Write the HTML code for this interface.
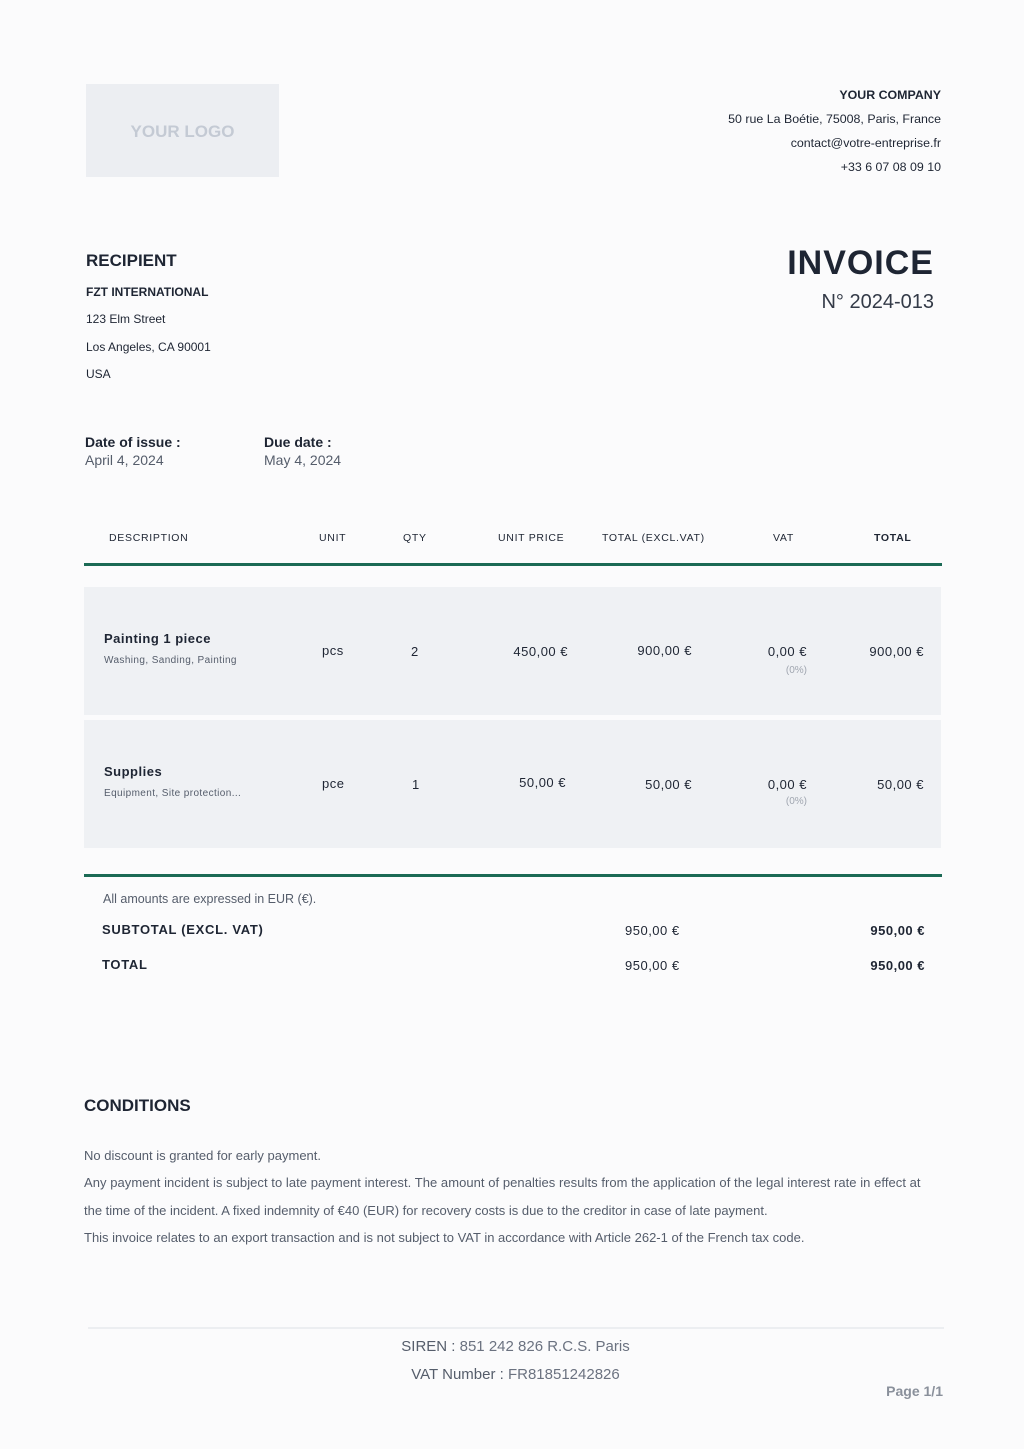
<!DOCTYPE html>
<html><head><meta charset="utf-8"><style>
*{margin:0;padding:0;box-sizing:border-box}
body{width:1024px;height:1449px;background:#fbfbfc;font-family:"Liberation Sans",sans-serif;color:#1e2533;position:relative;overflow:hidden}
.a{position:absolute;white-space:nowrap}
.r{text-align:right}
.c{text-align:center}
.s{font-size:12px}
.n{font-size:13px;letter-spacing:.5px}
.h{font-size:10.5px;letter-spacing:.7px;color:#1e2533}
.g{color:#555d6b}
.row{position:absolute;left:84px;width:857px;background:#eff1f4}
.line{position:absolute;left:84px;width:858px;height:3px;background:#1b6a55}
</style></head><body>
<div class="a" style="left:86px;top:84px;width:193px;height:93px;background:#eceef2"></div>
<div class="a c" style="left:86px;top:122px;width:193px;font-size:17px;font-weight:bold;color:#c4cad4">YOUR LOGO</div>

<div class="a r" style="right:83px;top:88px;font-weight:bold;font-size:12.4px">YOUR COMPANY</div>
<div class="a r" style="right:83px;top:112px;font-size:12.4px">50 rue La Boétie, 75008, Paris, France</div>
<div class="a r" style="right:83px;top:136px;font-size:12.4px">contact@votre-entreprise.fr</div>
<div class="a r" style="right:83px;top:160px;font-size:12.4px">+33 6 07 08 09 10</div>

<div class="a" style="left:86px;top:251px;font-size:17px;font-weight:bold">RECIPIENT</div>
<div class="a s" style="left:86px;top:285px;font-weight:bold">FZT INTERNATIONAL</div>
<div class="a s" style="left:86px;top:312px">123 Elm Street</div>
<div class="a s" style="left:86px;top:340px">Los Angeles, CA 90001</div>
<div class="a s" style="left:86px;top:367px">USA</div>

<div class="a r" style="right:90px;top:244px;font-size:34px;font-weight:bold;letter-spacing:1px">INVOICE</div>
<div class="a r" style="right:90px;top:291px;font-size:20px;color:#333a47">N° 2024-013</div>

<div class="a" style="left:85px;top:434px;font-size:14px;font-weight:bold">Date of issue :</div>
<div class="a g" style="left:85px;top:452px;font-size:14px">April 4, 2024</div>
<div class="a" style="left:264px;top:434px;font-size:14px;font-weight:bold">Due date :</div>
<div class="a g" style="left:264px;top:452px;font-size:14px">May 4, 2024</div>

<div class="a h" style="left:109px;top:532px">DESCRIPTION</div>
<div class="a h" style="left:319px;top:532px">UNIT</div>
<div class="a h" style="left:403px;top:532px">QTY</div>
<div class="a h" style="left:498px;top:532px">UNIT PRICE</div>
<div class="a h" style="left:602px;top:532px">TOTAL (EXCL.VAT)</div>
<div class="a h" style="left:773px;top:532px">VAT</div>
<div class="a h" style="left:874px;top:532px;font-weight:bold">TOTAL</div>
<div class="line" style="top:563px"></div>

<div class="row" style="top:587px;height:128px"></div>
<div class="a" style="left:104px;top:631px;font-size:13px;font-weight:bold;letter-spacing:.5px">Painting 1 piece</div>
<div class="a g" style="left:104px;top:655px;font-size:10px;letter-spacing:.4px">Washing, Sanding, Painting</div>
<div class="a n" style="left:322px;top:643px">pcs</div>
<div class="a n" style="left:411px;top:644px">2</div>
<div class="a r n" style="right:456px;top:644px">450,00 €</div>
<div class="a r n" style="right:332px;top:643px">900,00 €</div>
<div class="a r n" style="right:217px;top:644px">0,00 €</div>
<div class="a r" style="right:217px;top:665px;font-size:10px;color:#a0a6b0">(0%)</div>
<div class="a r n" style="right:100px;top:644px">900,00 €</div>

<div class="row" style="top:720px;height:128px"></div>
<div class="a" style="left:104px;top:764px;font-size:13px;font-weight:bold;letter-spacing:.5px">Supplies</div>
<div class="a g" style="left:104px;top:788px;font-size:10px;letter-spacing:.4px">Equipment, Site protection...</div>
<div class="a n" style="left:322px;top:776px">pce</div>
<div class="a n" style="left:412px;top:777px">1</div>
<div class="a r n" style="right:458px;top:775px">50,00 €</div>
<div class="a r n" style="right:332px;top:777px">50,00 €</div>
<div class="a r n" style="right:217px;top:777px">0,00 €</div>
<div class="a r" style="right:217px;top:796px;font-size:10px;color:#a0a6b0">(0%)</div>
<div class="a r n" style="right:100px;top:777px">50,00 €</div>

<div class="line" style="top:874px"></div>
<div class="a g" style="left:103px;top:892px;font-size:12.5px">All amounts are expressed in EUR (€).</div>
<div class="a" style="left:102px;top:922px;font-size:13px;font-weight:bold;letter-spacing:.7px">SUBTOTAL (EXCL. VAT)</div>
<div class="a n" style="left:625px;top:923px">950,00 €</div>
<div class="a r n" style="right:99px;top:923px;font-weight:bold">950,00 €</div>
<div class="a" style="left:102px;top:957px;font-size:13px;font-weight:bold;letter-spacing:.7px">TOTAL</div>
<div class="a n" style="left:625px;top:958px">950,00 €</div>
<div class="a r n" style="right:99px;top:958px;font-weight:bold">950,00 €</div>

<div class="a" style="left:84px;top:1096px;font-size:17px;font-weight:bold">CONDITIONS</div>
<div class="a g" style="left:84px;top:1148px;font-size:13px">No discount is granted for early payment.</div>
<div class="a g" style="left:84px;top:1175px;font-size:13px;letter-spacing:.05px">Any payment incident is subject to late payment interest. The amount of penalties results from the application of the legal interest rate in effect at</div>
<div class="a g" style="left:84px;top:1203px;font-size:13px">the time of the incident. A fixed indemnity of €40 (EUR) for recovery costs is due to the creditor in case of late payment.</div>
<div class="a g" style="left:84px;top:1230px;font-size:13px">This invoice relates to an export transaction and is not subject to VAT in accordance with Article 262-1 of the French tax code.</div>

<div class="a" style="left:88px;top:1327px;width:856px;height:2px;background:#eceef1"></div>
<div class="a c" style="left:0;width:1031px;top:1338px;font-size:15px;color:#6b7280"><span style="color:#555d6b">SIREN :</span> 851 242 826 R.C.S. Paris</div>
<div class="a c" style="left:0;width:1031px;top:1366px;font-size:15px;color:#6b7280"><span style="color:#555d6b">VAT Number :</span> FR81851242826</div>
<div class="a r" style="right:81px;top:1383px;font-size:14px;font-weight:bold;color:#8a909b">Page 1/1</div>
</body></html>
